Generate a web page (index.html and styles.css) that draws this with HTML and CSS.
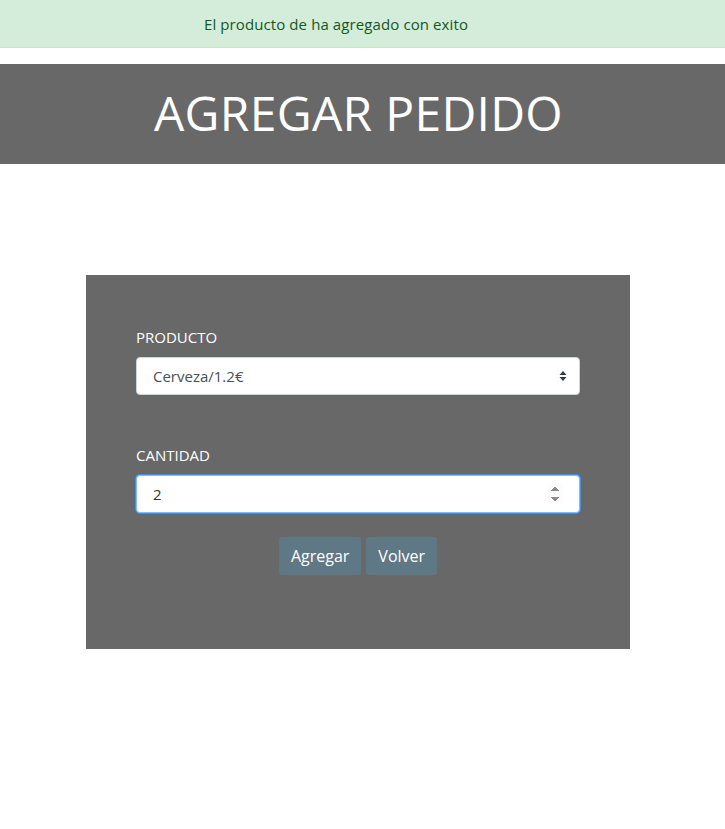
FILE: index.html
```html
<!DOCTYPE html>
<html lang="es">
<head>
<meta charset="utf-8">
<title>Agregar pedido</title>
<link rel="stylesheet" href="styles.css">
</head>
<body>
<div class="alert">El producto de ha agregado con exito</div>
<header class="banner"><h1>AGREGAR PEDIDO</h1></header>
<main class="wrap">
  <form class="panel">
    <div class="field">
      <label for="prod">PRODUCTO</label>
      <select id="prod" class="control select">
        <option>Cerveza/1.2€</option>
      </select>
    </div>
    <div class="field">
      <label for="cant">CANTIDAD</label>
      <input id="cant" class="control num" type="number" value="2" autofocus>
    </div>
    <div class="actions">
      <button type="button" class="btn">Agregar</button>
      <button type="button" class="btn">Volver</button>
    </div>
  </form>
</main>
</body>
</html>
```
FILE: styles.css
```css
* { box-sizing: border-box; }
html, body { margin: 0; padding: 0; background: #fff; }
body { font-family: "Open Sans", "Noto Sans", sans-serif; font-size: 15px; }

.alert {
  height: 48px;
  background: #d4edda;
  border-bottom: 1px solid #c3e6cb;
  color: #155724;
  display: flex;
  align-items: center;
  justify-content: center;
  padding-right: 53px;
  font-size: 15px;
  letter-spacing: 0.1px;
}

.banner {
  margin-top: 16px;
  height: 100px;
  background: #686868;
  display: flex;
  align-items: center;
  justify-content: center;
}
.banner h1 {
  margin: 0;
  color: #fff;
  font-weight: 400;
  font-size: 48px;
  letter-spacing: 0.3px;
  padding-right: 8px;
  padding-bottom: 4px;
}

.wrap { padding: 111px 95px 0 86px; }

.panel {
  background: #686868;
  height: 374px;
  padding: 50px 50px 0 50px;
}

.field { display: flex; flex-direction: column; }
.field + .field { margin-top: 48px; }
.field label {
  color: #fff;
  font-size: 15px;
  line-height: 22px;
  margin-bottom: 9px;
  margin-top: 1px;
}

.control {
  width: 100%;
  height: 38px;
  border: 1px solid #ced4da;
  border-radius: 4px;
  background-color: #fff;
  font-family: inherit;
  font-size: 15px;
  color: #495057;
  padding: 0 16px;
}
.select {
  appearance: none;
  -webkit-appearance: none;
  background-image: url("data:image/svg+xml;utf8,<svg xmlns='http://www.w3.org/2000/svg' width='8' height='12' viewBox='0 0 8 12'><path d='M4 1 L7.5 5 H0.5 Z M4 11 L0.5 7 H7.5 Z' fill='%23343a40'/></svg>");
  background-repeat: no-repeat;
  background-position: right 12px center;
  background-size: 8px 12px;
}
.num {
  border-color: #80bdff;
  outline: none;
  box-shadow: 0 0 0 1px #4d8fd6, 0 0 0 2px rgba(0,123,255,.25);
  color: #333;
}
.num:focus { outline: none; }

.actions {
  display: flex;
  justify-content: center;
  gap: 5px;
  margin-top: 24px;
}
.btn {
  height: 38px;
  padding: 0 12px;
  background: #5f7886;
  border: none;
  border-radius: 3px;
  color: #fff;
  font-family: inherit;
  font-size: 16px;
}
```
